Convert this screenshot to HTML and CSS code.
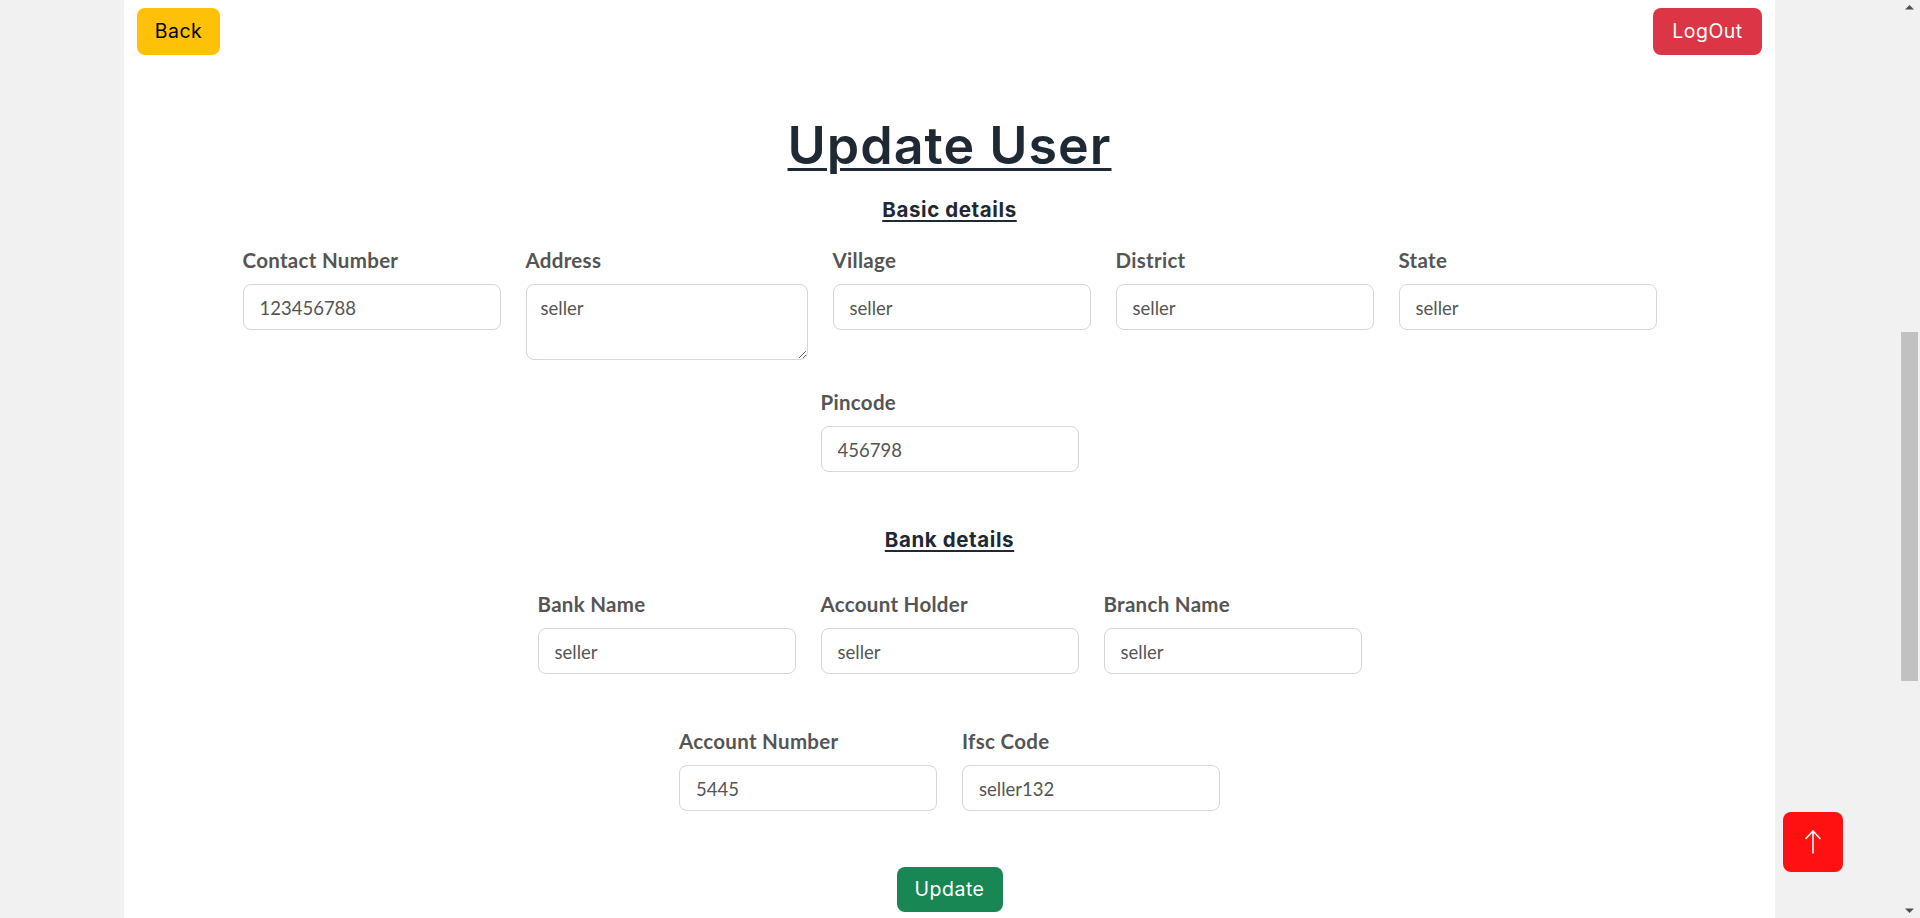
FILE: index.html
```html
<!DOCTYPE html>
<html lang="en">
<head>
<meta charset="utf-8">
<title>Update User</title>
<link rel="stylesheet" href="styles.css">
</head>
<body>
<div class="viewport">
  <div class="page">
    <header class="topbar">
      <button class="btn btn-back" type="button">Back</button>
      <button class="btn btn-logout" type="button">LogOut</button>
    </header>
    <main class="form-wrap">
      <h1 class="title">Update User</h1>
      <h2 class="section-title sec-basic">Basic details</h2>
      <div class="row row-basic">
        <div class="field">
          <label class="label">Contact Number</label>
          <input class="input" type="text" value="123456788">
        </div>
        <div class="field field-wide">
          <label class="label">Address</label>
          <textarea class="input textarea">seller</textarea>
        </div>
        <div class="field">
          <label class="label">Village</label>
          <input class="input" type="text" value="seller">
        </div>
        <div class="field">
          <label class="label">District</label>
          <input class="input" type="text" value="seller">
        </div>
        <div class="field">
          <label class="label">State</label>
          <input class="input" type="text" value="seller">
        </div>
      </div>
      <div class="row row-pin">
        <div class="field">
          <label class="label">Pincode</label>
          <input class="input" type="text" value="456798">
        </div>
      </div>
      <h2 class="section-title sec-bank">Bank details</h2>
      <div class="row row-bank">
        <div class="field">
          <label class="label">Bank Name</label>
          <input class="input" type="text" value="seller">
        </div>
        <div class="field">
          <label class="label">Account Holder</label>
          <input class="input" type="text" value="seller">
        </div>
        <div class="field">
          <label class="label">Branch Name</label>
          <input class="input" type="text" value="seller">
        </div>
      </div>
      <div class="row row-acc">
        <div class="field">
          <label class="label">Account Number</label>
          <input class="input" type="text" value="5445">
        </div>
        <div class="field">
          <label class="label">Ifsc Code</label>
          <input class="input" type="text" value="seller132">
        </div>
      </div>
      <div class="actions">
        <button class="btn btn-update" type="button">Update</button>
      </div>
    </main>
  </div>
</div>
<div class="scrollbar" aria-hidden="true">
  <div class="sb-btn">
    <svg width="21" height="17" viewBox="0 0 21 17"><path d="M6 9.5h9L10.5 5z" fill="#505050"/></svg>
  </div>
  <div class="sb-track">
    <div class="sb-thumb"></div>
  </div>
  <div class="sb-btn">
    <svg width="21" height="17" viewBox="0 0 21 17"><path d="M6 7.5h9L10.5 12z" fill="#505050"/></svg>
  </div>
</div>
<button class="to-top" type="button" aria-label="Scroll to top">
  <svg width="24" height="26" viewBox="0 0 24 26" fill="none" stroke="#ffffff" stroke-width="1.6" stroke-linecap="round" stroke-linejoin="round">
    <path d="M12 24V2"/>
    <path d="M5 9.5L12 2l7 7.5"/>
  </svg>
</button>
</body>
</html>
```

FILE: styles.css
```css
body {
  margin: 0;
  background: #f1f1f1;
  font-family: "Lato", "Open Sans", sans-serif;
  display: flex;
  min-height: 100vh;
  overflow: hidden;
}

.viewport {
  flex: 1;
  min-width: 0;
}

.page {
  width: 1651px;
  margin: 0 auto;
  min-height: 100vh;
  background: #ffffff;
  box-sizing: border-box;
}

.scrollbar {
  flex: none;
  width: 21px;
  height: 100vh;
  background: #f1f1f1;
  display: flex;
  flex-direction: column;
}

.sb-btn {
  height: 17px;
  flex: none;
  display: flex;
}

.sb-track {
  flex: 1;
  padding: 315px 2px 0;
}

.sb-thumb {
  height: 349px;
  background: #c1c1c1;
}

.topbar {
  display: flex;
  justify-content: space-between;
  align-items: flex-start;
  padding: 8px 13px 0;
  height: 55px;
  box-sizing: border-box;
}

.btn {
  font-family: "Inter", "DejaVu Sans", sans-serif;
  font-size: 19.5px;
  letter-spacing: 0.5px;
  font-weight: 400;
  height: 47px;
  border: none;
  border-radius: 8px;
  padding: 0 17px;
  cursor: pointer;
  line-height: 1;
}

.btn-back {
  background: #ffc107;
  color: #000000;
  width: 83px;
}

.btn-logout {
  background: #dc3545;
  color: #ffffff;
  width: 109px;
}

.btn-update {
  background: #198754;
  color: #ffffff;
  width: 106px;
  height: 45px;
}

.form-wrap {
  display: flex;
  flex-direction: column;
  align-items: center;
}

.title {
  margin: 60px 0 0;
  font-family: "Inter", "DejaVu Sans", sans-serif;
  font-weight: 600;
  font-size: 52px;
  line-height: 62px;
  letter-spacing: 1px;
  color: #1f2933;
  text-decoration: underline;
  text-decoration-thickness: 3px;
  text-underline-offset: 4px;
}

.section-title {
  margin: 0;
  font-family: "Inter", "DejaVu Sans", sans-serif;
  font-weight: 700;
  font-size: 20.5px;
  line-height: 24px;
  letter-spacing: 0.6px;
  color: #1f2933;
  text-decoration: underline;
  text-decoration-thickness: 2px;
  text-underline-offset: 3px;
}

.sec-basic {
  margin-top: 21px;
}

.sec-bank {
  margin-top: 56px;
}

.row {
  display: flex;
  justify-content: center;
  align-items: flex-start;
  gap: 25px;
}

.row-basic {
  margin-top: 26px;
}

.row-pin {
  margin-top: 30px;
}

.row-bank {
  margin-top: 40px;
}

.row-acc {
  margin-top: 55px;
}

.field {
  display: flex;
  flex-direction: column;
  width: 258px;
}

.field-wide {
  width: 282px;
}

.label {
  font-family: "Lato", "Open Sans", sans-serif;
  font-weight: 700;
  font-size: 20.5px;
  letter-spacing: 0.3px;
  line-height: 24px;
  color: #555555;
  margin-bottom: 12px;
}

.input {
  box-sizing: border-box;
  width: 100%;
  height: 46px;
  border: 1px solid #d3d6dc;
  border-radius: 8px;
  padding: 2px 16px 0;
  font-family: "Lato", "Open Sans", sans-serif;
  font-size: 18.5px;
  color: #555555;
  background: #ffffff;
  outline: none;
}

.textarea {
  height: 76px;
  padding: 10px 14px 6px;
  line-height: 26px;
  resize: vertical;
}

.actions {
  margin-top: 56px;
  display: flex;
  justify-content: center;
}

.to-top {
  position: fixed;
  right: 77px;
  bottom: 46px;
  width: 60px;
  height: 60px;
  border: none;
  border-radius: 8px;
  background: #ff1111;
  display: flex;
  align-items: center;
  justify-content: center;
  padding: 0;
  cursor: pointer;
}
```
